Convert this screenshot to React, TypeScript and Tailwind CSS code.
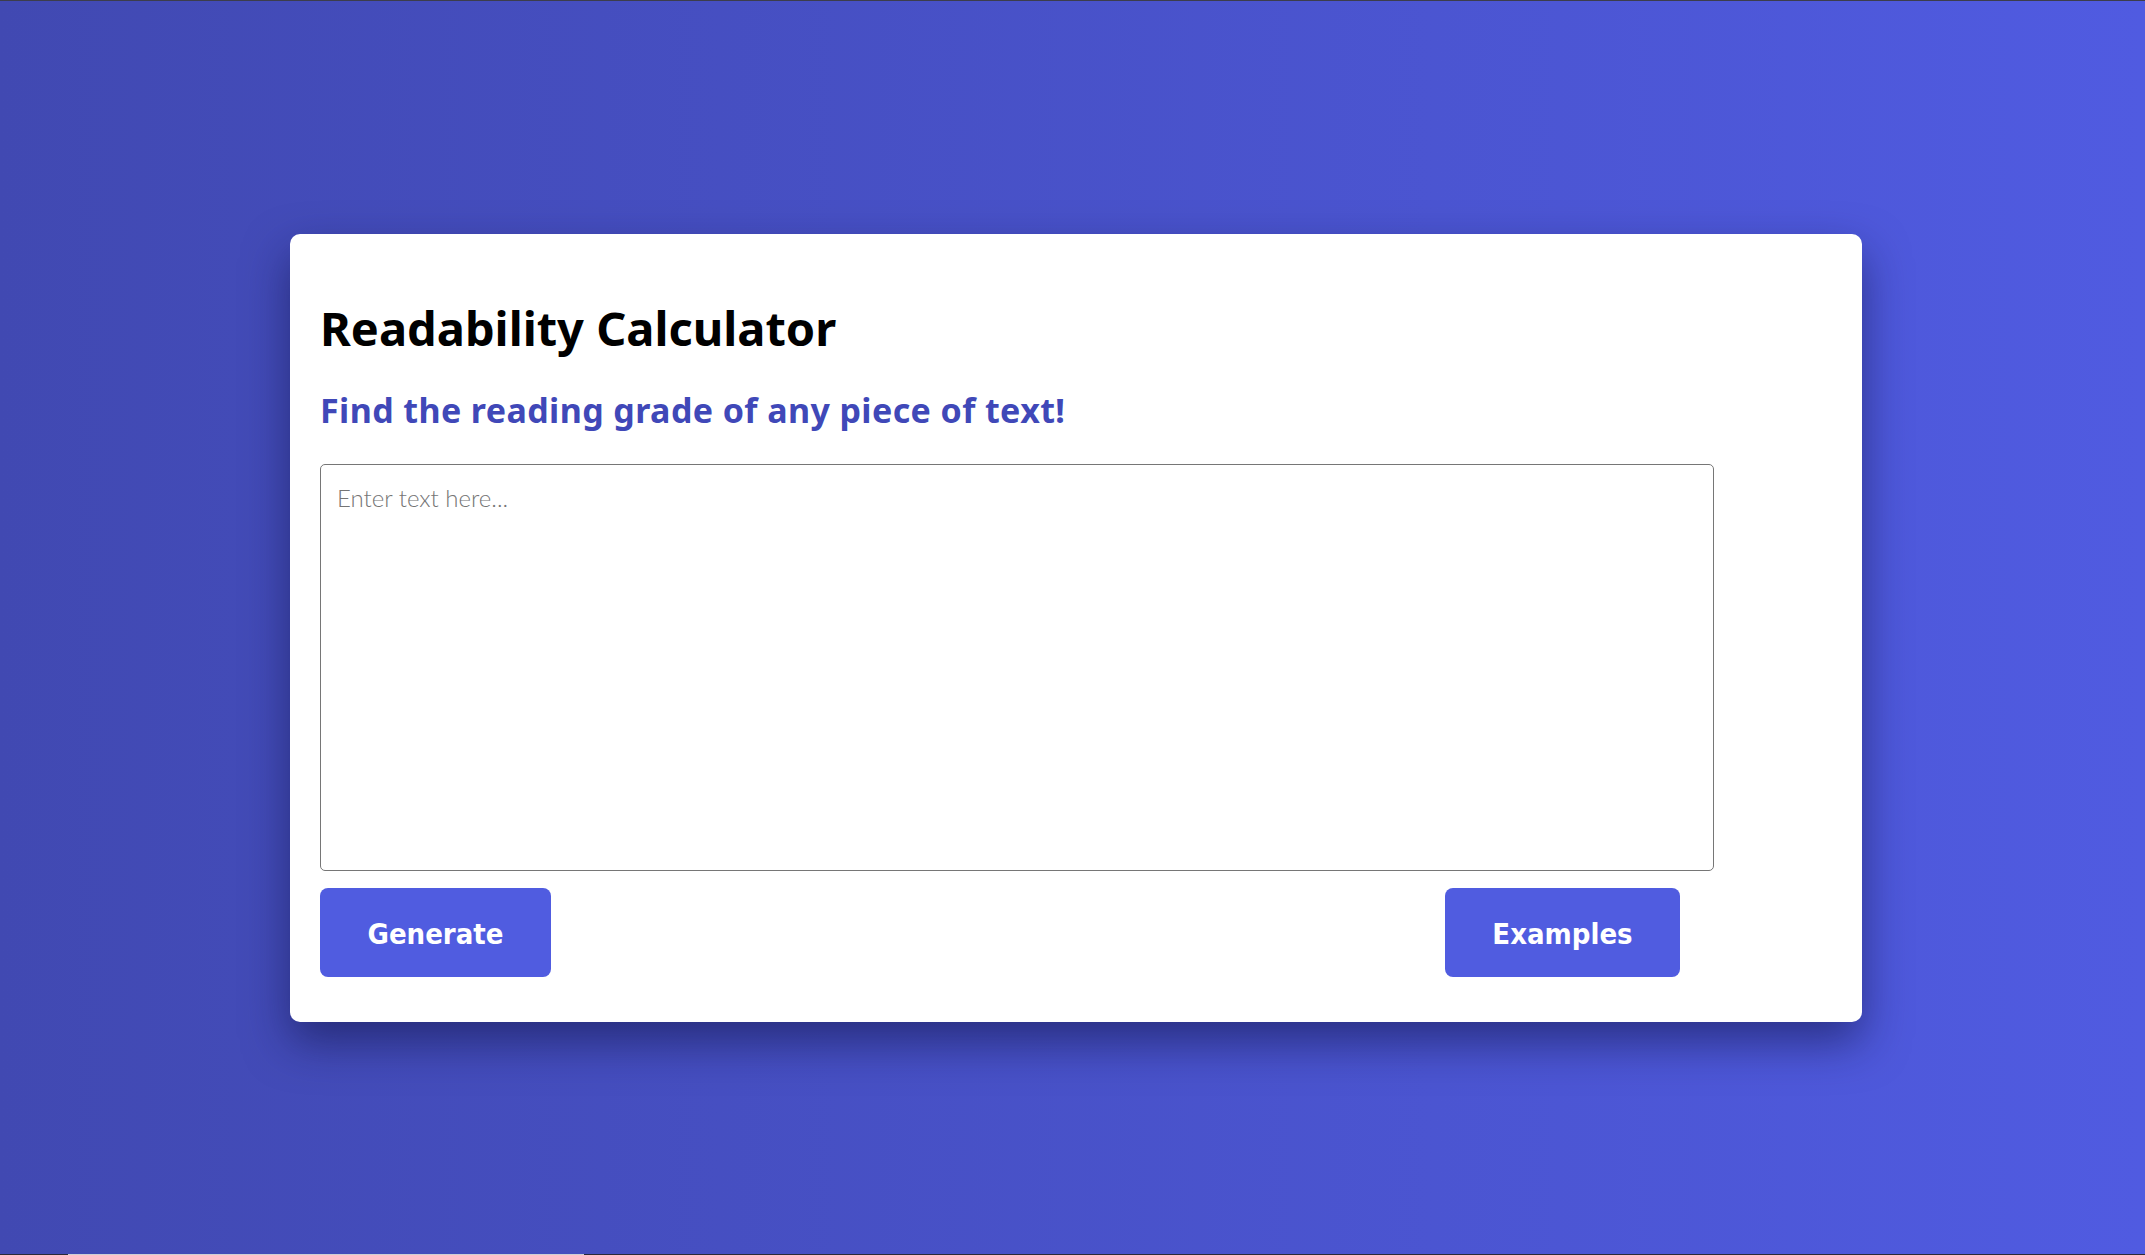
import { useState } from 'react';

const headFont = { fontFamily: '"Noto Sans", Lato, sans-serif' };
const bodyFont = { fontFamily: 'Lato, "Noto Sans", sans-serif' };
const btnFont = { fontFamily: '"DejaVu Sans Condensed", "DejaVu Sans", sans-serif', fontStretch: 'condensed' as const };

export default function App() {
  const [text, setText] = useState('');

  return (
    <div className="flex h-screen w-full flex-col bg-linear-to-r from-[#4149b2] to-[#505be1]" style={bodyFont}>
      <div className="h-px w-full bg-[#3c3d4c]" />
      <div className="flex flex-1 items-center justify-center pl-[7px]">
        <div className="w-[1572px] rounded-[10px] bg-white pb-[45px] pl-[30px] pt-[65px] shadow-[0_20px_45px_rgba(15,18,70,0.55)]">
          <h1 className="text-[47px] font-bold leading-[58px] text-black" style={headFont}>
            Readability Calculator
          </h1>
          <h2
            className="mt-[33px] text-[34px] font-bold leading-[40px] tracking-[0.4px] text-[#4048b8]"
            style={headFont}
          >
            Find the reading grade of any piece of text!
          </h2>
          <textarea
            value={text}
            onChange={(e) => setText(e.target.value)}
            placeholder="Enter text here..."
            className="mt-[34px] block h-[407px] w-[1394px] resize-none rounded-[5px] border border-[#767676] px-[16px] py-[15px] text-[24px] font-light text-black outline-none placeholder:text-[#757575]"
            style={bodyFont}
          />
          <div className="mt-[17px] flex w-[1360px] items-center justify-between">
            <button
              className="flex h-[89px] w-[231px] items-center justify-center rounded-[8px] bg-[#505ce0] pt-[5px] text-[29px] font-bold text-white"
              style={btnFont}
            >
              Generate
            </button>
            <button
              className="flex h-[89px] w-[235px] items-center justify-center rounded-[8px] bg-[#505ce0] pt-[5px] text-[29px] font-bold text-white"
              style={btnFont}
            >
              Examples
            </button>
          </div>
        </div>
      </div>
      <div className="flex h-px w-full bg-[#2a2a38]">
        <div className="ml-[68px] h-px w-[516px] bg-[#cfcfd4]" />
      </div>
    </div>
  );
}
